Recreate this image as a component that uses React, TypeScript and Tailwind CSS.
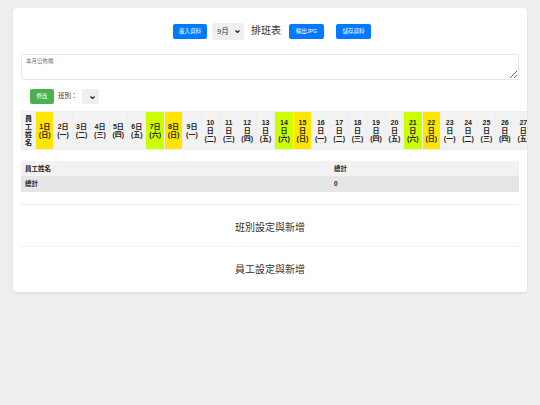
const days = ["日", "一", "二", "三", "四", "五", "六"];

const dayList = Array.from({ length: 27 }, (_, i) => {
  const day = i + 1;
  const wk = days[i % 7];
  return { day, wk };
});

const cellColor = (wk: string) => {
  if (wk === "日") return "bg-[#ffe600]";
  if (wk === "六") return "bg-[#ccff00]";
  return "bg-[#f2f2f2]";
};

const font = "font-['Liberation_Sans','Noto_Sans_CJK_TC',sans-serif]";

const Chevron = () => (
  <svg className="pointer-events-none absolute top-[7px] right-[4px] h-[3px] w-[5px]" viewBox="0 0 10 6" fill="none" stroke="#222" strokeWidth="2.4">
    <path d="M1 1l4 4 4-4" />
  </svg>
);

export default function App() {
  return (
    <div className={`min-h-[405px] bg-[#eeeeee] px-[13px] pt-2 ${font}`}>
      <div className="h-[284px] overflow-hidden rounded-[4px] bg-white px-2 pt-[15px] shadow-[0_1px_3px_rgba(0,0,0,0.08)]">
        <div className="flex h-4 items-center justify-center pl-1">
          <button className="h-[15px] w-[34px] rounded-[2px] bg-[#007bff] text-[5.5px] text-white">載入資料</button>
          <div className="relative ml-[5px] flex h-[17px] w-[32px] items-center rounded-[2px] bg-[#efefef]">
            <select className="h-[17px] w-full appearance-none bg-transparent pl-[5px] text-[7.5px] leading-[17px] text-[#333]" defaultValue="9">
              <option value="9">9月</option>
            </select>
            <Chevron />
          </div>
          <h1 className="ml-[7px] text-[10px] leading-4 font-normal text-[#333]">排班表</h1>
          <button className="ml-2 h-[15px] w-[35px] rounded-[2px] bg-[#007bff] text-[5.5px] text-white">輸出JPG</button>
          <button className="ml-3 h-[15px] w-[35px] rounded-[2px] bg-[#007bff] text-[5.5px] text-white">儲存資料</button>
        </div>

        <textarea
          className="mt-[15px] block h-[26px] w-full rounded-[2px] border border-[#e6e6e6] px-[4px] py-[3px] text-[5.5px] leading-[7px] placeholder:text-[#777]"
          placeholder="本月公佈欄"
        />

        <div className="mt-2 flex h-[16px] items-center pl-[9px]">
          <button className="h-[15px] w-[24px] rounded-[2px] bg-[#4caf50] text-[5.5px] text-white">修改</button>
          <span className="ml-1 text-[6.5px] text-[#333]">班別：</span>
          <div className="relative ml-[4px] h-[15px] w-[17px] rounded-[2px] bg-[#efefef]">
            <select className="h-full w-full appearance-none bg-transparent" />
            <Chevron />
          </div>
        </div>

        <table className="mt-[7px] w-[512px] table-fixed border-collapse text-[7px] leading-[8px] font-bold text-[#222]">
          <thead>
            <tr className="h-[38px]">
              <th className="w-[14px] border border-[#eeeeee] bg-[#f2f2f2] px-[3px]">員工姓名</th>
              {dayList.map((d) => (
                <th key={d.day} className={`w-[18.42px] border border-[#eeeeee] px-0 ${cellColor(d.wk)}`}>
                  {d.day}{d.day >= 10 && <br />}日<br />({d.wk})
                </th>
              ))}
            </tr>
          </thead>
        </table>

        <div className="mt-[11px] text-[6.5px] font-bold text-[#222]">
          <div className="flex h-[15px] items-center bg-[#f2f2f2] px-1">
            <span className="w-[309px]">員工姓名</span>
            <span>總計</span>
          </div>
          <div className="flex h-4 items-center bg-[#e6e6e6] px-1">
            <span className="w-[309px]">總計</span>
            <span>0</span>
          </div>
        </div>

        <div className="mt-3 flex h-[42px] items-center justify-center border-t border-[#eeeeee] pt-[3px] text-[10px] text-[#333]">班別設定與新增</div>
        <div className="flex h-[42px] items-center justify-center border-t border-[#eeeeee] pt-[3px] text-[10px] text-[#333]">員工設定與新增</div>
      </div>
    </div>
  );
}
